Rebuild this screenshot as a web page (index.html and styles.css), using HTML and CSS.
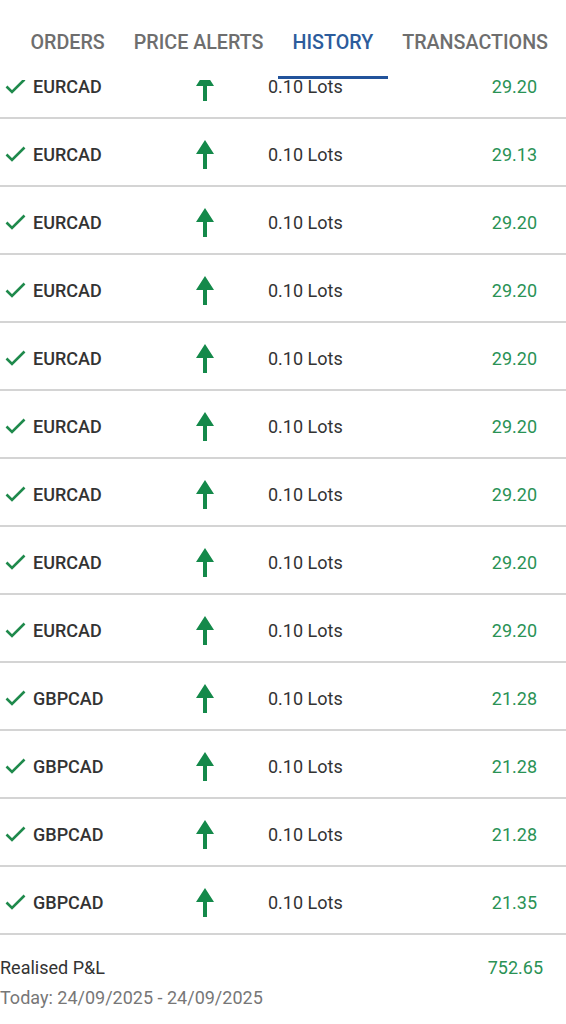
FILE: index.html
```html
<!DOCTYPE html>
<html>
<head>
<meta charset="utf-8">
<link rel="stylesheet" href="styles.css">
</head>
<body>
<div class="screen">
  <div class="tabs">
    <div class="tab">ORDERS</div>
    <div class="tab">PRICE ALERTS</div>
    <div class="tab active">HISTORY</div>
    <div class="tab">TRANSACTIONS</div>
  </div>
  <div class="list" id="list"></div>
  <div class="footer">
    <div class="footer-row">
      <span class="pl-label">Realised P&amp;L</span>
      <span class="pl-value">752.65</span>
    </div>
    <div class="pl-date">Today: 24/09/2025 - 24/09/2025</div>
  </div>
</div>
<script>
  var rows = [
    ["EURCAD","29.20"],["EURCAD","29.13"],["EURCAD","29.20"],["EURCAD","29.20"],
    ["EURCAD","29.20"],["EURCAD","29.20"],["EURCAD","29.20"],["EURCAD","29.20"],
    ["EURCAD","29.20"],["GBPCAD","21.28"],["GBPCAD","21.28"],["GBPCAD","21.28"],
    ["GBPCAD","21.35"]
  ];
  var html = "";
  rows.forEach(function (r) {
    html += '<div class="row">' +
      '<span class="check"><svg width="21" height="16" viewBox="0 0 21 16"><polyline points="1.5,8.5 7,14 19.5,1.5" fill="none" stroke="#1f8a4c" stroke-width="2.6"/></svg></span>' +
      '<span class="sym">' + r[0] + '</span>' +
      '<span class="dir"><svg width="18" height="29" viewBox="0 0 18 29"><polygon points="9,0 18,14 11,14 11,29 7,29 7,14 0,14" fill="#14894a"/></svg></span>' +
      '<span class="lots">0.10 Lots</span>' +
      '<span class="val">' + r[1] + '</span>' +
      '</div>';
  });
  document.getElementById("list").innerHTML = html;
</script>
</body>
</html>
```
FILE: styles.css
```css
html, body {
  margin: 0;
  padding: 0;
  background: #fff;
}
body {
  font-family: Roboto, "Liberation Sans", sans-serif;
  color: #333;
  width: 566px;
  height: 1024px;
  overflow: hidden;
}
.screen {
  position: relative;
  width: 566px;
}
.tabs {
  position: absolute;
  top: 0;
  left: 0;
  right: 0;
  height: 80px;
  background: #fff;
  display: flex;
  align-items: flex-start;
  padding-left: 16px;
  z-index: 2;
}
.tab {
  position: relative;
  padding: 0 14.5px;
  height: 79px;
  line-height: 86px;
  font-size: 19.7px;
  font-weight: 500;
  color: #6e6e6e;
  white-space: nowrap;
}
.tab.active {
  color: #2c5c9c;
}
.tab.active::after {
  content: "";
  position: absolute;
  left: 0;
  right: 0;
  bottom: 0;
  height: 3px;
  background: #22539b;
}
.list {
  padding-top: 51px;
}
.row {
  display: flex;
  align-items: center;
  padding-top: 4px;
  box-sizing: border-box;
  height: 68px;
  border-bottom: 2px solid #d4d4d4;
  font-size: 18px;
}
.check {
  width: 33px;
  padding-left: 5px;
  box-sizing: border-box;
  display: flex;
  align-items: center;
}
.sym {
  width: 163px;
  font-weight: 500;
  color: #333;
}
.dir {
  width: 18px;
  display: flex;
}
.lots {
  margin-left: 54px;
  flex: 1;
  color: #333;
}
.val {
  padding-right: 29px;
  color: #2a9255;
}
.footer {
  padding-top: 21px;
}
.footer-row {
  display: flex;
  justify-content: space-between;
  font-size: 18px;
  line-height: 24px;
  padding-right: 23px;
}
.pl-label {
  color: #333;
}
.pl-value {
  color: #2a9255;
}
.pl-date {
  margin-top: 6px;
  font-size: 18px;
  line-height: 24px;
  color: #777;
}
```
